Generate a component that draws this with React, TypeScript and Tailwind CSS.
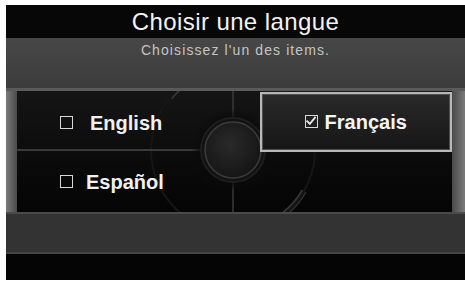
import React from 'react';

function Box({ checked }: { checked?: boolean }) {
  return (
    <span className="relative inline-block w-[13px] h-[13px] border-[1.5px] border-[#d8d8d8] shrink-0">
      {checked && (
        <svg className="absolute -left-[1px] -top-[1px] w-[12px] h-[12px]" viewBox="0 0 12 12" fill="none">
          <path d="M2.2 6.2 L4.8 8.8 L10 2.6" stroke="#e8e8e8" strokeWidth="1.8" strokeLinecap="square" />
        </svg>
      )}
    </span>
  );
}

export default function App() {
  const font = { fontFamily: '"Liberation Sans", Arial, sans-serif' };
  return (
    <div className="w-[465px] h-[282px] bg-white pl-[6px] pt-[5px] pb-[2px]" style={font}>
      <div className="flex flex-col h-full bg-[#060606]">
        <div className="h-[33px] bg-[#070707] flex items-center justify-center text-[24px] tracking-[0.4px] text-[#f2f2f2] leading-none pt-[1px]">
          Choisir une langue
        </div>

        <div className="h-[50px] bg-gradient-to-b from-[#474747] to-[#3c3c3c] flex justify-center pt-[5px]">
          <span className="text-[14px] text-[#c4c4c4] tracking-[1.1px] leading-none">Choisissez l'un des items.</span>
        </div>

        <div className="h-[124px] flex border-t-[3px] border-[#5a5a5a] bg-[#0d0d0d]">
          <div className="w-[11px] bg-gradient-to-r from-[#7a7a7a] to-[#4a4a4a]" />

          <div className="relative flex-1 bg-gradient-to-b from-[#151515] to-[#050505]">
            <svg className="absolute inset-0 w-full h-full" viewBox="0 0 435 121" preserveAspectRatio="none">
              <defs>
                <radialGradient id="knob" cx="45%" cy="40%" r="60%">
                  <stop offset="0%" stopColor="#2a2a2a" />
                  <stop offset="100%" stopColor="#151515" />
                </radialGradient>
                <radialGradient id="halo" cx="50%" cy="50%" r="50%">
                  <stop offset="70%" stopColor="#080808" />
                  <stop offset="100%" stopColor="#0d0d0d" stopOpacity="0" />
                </radialGradient>
              </defs>
              <circle cx="216" cy="59" r="82" fill="none" stroke="#161616" strokeWidth="2" />
              <path d="M154.7 7.6 A80 80 0 0 1 176 -10.3" fill="none" stroke="#3a3a3a" strokeWidth="1.5" />
              <path d="M285.3 99 A80 80 0 0 1 261.9 124.5" fill="none" stroke="#3a3a3a" strokeWidth="1.5" />
              <path d="M289 101 A84 84 0 0 1 264 128" fill="none" stroke="#2c2c2c" strokeWidth="1.5" />
              <line x1="0" y1="59" x2="216" y2="59" stroke="#4a4a4a" strokeWidth="1.5" />
              <line x1="216" y1="0" x2="216" y2="121" stroke="#3a3a3a" strokeWidth="1.5" />
              <circle cx="216" cy="59" r="42" fill="url(#halo)" />
              <circle cx="216" cy="59" r="32" fill="#121212" stroke="#1e1e1e" strokeWidth="2" />
              <circle cx="216" cy="59" r="28" fill="url(#knob)" stroke="#3c3c3c" strokeWidth="1.5" />
            </svg>

            <div className="relative grid grid-cols-2 grid-rows-2 h-full">
              <div className="flex items-center pl-[43px] gap-[17px] text-[20px] font-bold text-[#f0f0f0] pt-[3px]">
                <Box />
                <span>English</span>
              </div>
              <div className="pl-[25px] pt-[1px]">
                <div className="h-full flex items-center justify-center gap-[7px] border-[2px] border-[#b8b8b8] bg-gradient-to-b from-[#2a2a2a] to-[#161616] shadow-[inset_0_0_0_1px_#505050] text-[20px] font-bold text-[#f4f4f4]">
                  <Box checked />
                  <span>Français</span>
                </div>
              </div>
              <div className="flex items-center pl-[43px] gap-[13px] text-[20px] font-bold text-[#f0f0f0]">
                <Box />
                <span>Español</span>
              </div>
              <div />
            </div>
          </div>

          <div className="w-[13px] bg-gradient-to-l from-[#7a7a7a] to-[#4a4a4a]" />
        </div>

        <div className="h-[42px] bg-[#333333] border-t-[2px] border-[#4a4a4a] border-b-[2px] border-b-[#444]" />
        <div className="flex-1 bg-[#050505]" />
      </div>
    </div>
  );
}
